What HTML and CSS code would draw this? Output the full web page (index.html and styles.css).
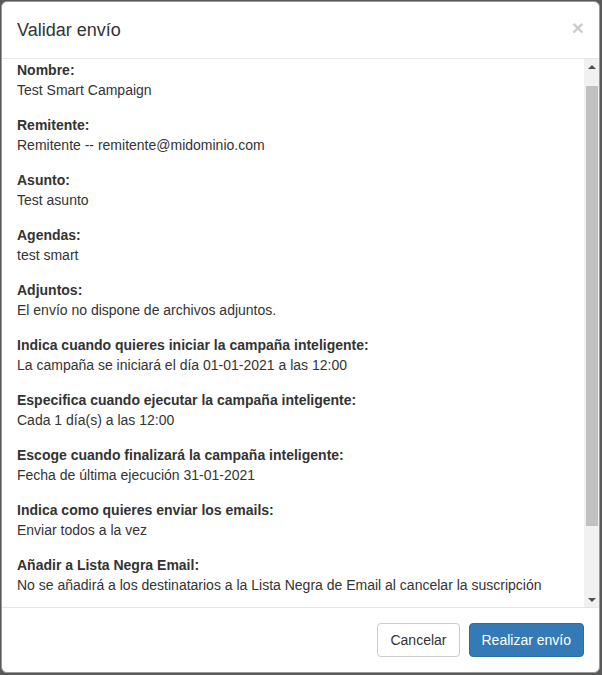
FILE: index.html
```html
<!DOCTYPE html>
<html>
  <head>
    <title>Validar envío</title>
    <link rel="stylesheet" href="styles.css">
  </head>
  <body>
    <div class="modal">
      <div class="modal-header">
        <h4 class="modal-title">Validar envío</h4>
        <button class="close" type="button">&times;</button>
      </div>

      <div class="modal-body">
        <div class="body-content" id="resumen">
          <div class="form-group">
            <label>Nombre:</label>
            <div>Test Smart Campaign</div>
          </div>
          <div class="form-group">
            <label>Remitente:</label>
            <div>Remitente -- remitente@midominio.com</div>
          </div>
          <div class="form-group">
            <label>Asunto:</label>
            <div>Test asunto</div>
          </div>
          <div class="form-group">
            <label>Agendas:</label>
            <div>test smart</div>
          </div>
          <div class="form-group">
            <label>Adjuntos:</label>
            <div>El envío no dispone de archivos adjuntos.</div>
          </div>
          <div class="form-group">
            <label>Indica cuando quieres iniciar la campaña inteligente:</label>
            <div>La campaña se iniciará el día 01-01-2021 a las 12:00</div>
          </div>
          <div class="form-group">
            <label>Especifica cuando ejecutar la campaña inteligente:</label>
            <div>Cada 1 día(s) a las 12:00</div>
          </div>
          <div class="form-group">
            <label>Escoge cuando finalizará la campaña inteligente:</label>
            <div>Fecha de última ejecución 31-01-2021</div>
          </div>
          <div class="form-group">
            <label>Indica como quieres enviar los emails:</label>
            <div>Enviar todos a la vez</div>
          </div>
          <div class="form-group">
            <label>Añadir a Lista Negra Email:</label>
            <div>No se añadirá a los destinatarios a la Lista Negra de Email al cancelar la suscripción</div>
          </div>
        </div>

        <!-- scrollbar of the summary list -->
        <div class="scrollbar">
          <div class="scroll-btn">
            <svg width="8" height="4" viewBox="0 0 8 4"><path d="M0 4 L4 0 L8 4 Z" fill="#505050"/></svg>
          </div>
          <div class="scroll-track">
            <div class="scroll-thumb"></div>
          </div>
          <div class="scroll-btn">
            <svg width="8" height="4" viewBox="0 0 8 4"><path d="M0 0 L8 0 L4 4 Z" fill="#505050"/></svg>
          </div>
        </div>
      </div>

      <div class="modal-footer">
        <button class="btn btn-default" type="button">Cancelar</button>
        <button class="btn btn-primary" type="button">Realizar envío</button>
      </div>
    </div>

    <script>
      document.getElementById("resumen").scrollTop = 14;
    </script>
  </body>
</html>
```

FILE: styles.css
```css
body {
  margin: 0;
  padding: 0;
  background-color: #595959;
  font-family: "Liberation Sans", Arial, sans-serif;
  font-size: 14px;
  line-height: 20px;
  color: #333;
}

.modal {
  box-sizing: border-box;
  display: flex;
  flex-direction: column;
  width: 599px;
  height: 672px;
  margin: 1px 0 0 1px;
  background-color: #fff;
  border: 1px solid #999;
  border-radius: 6px;
  overflow: hidden;
}

.modal-header {
  display: flex;
  align-items: center;
  justify-content: space-between;
  padding: 15px;
  border-bottom: 1px solid #e5e5e5;
}

.modal-title {
  margin: 0;
  font-size: 18px;
  font-weight: normal;
  line-height: 26px;
}

.close {
  padding: 0;
  margin-top: -6px;
  border: none;
  background: none;
  font-family: "Liberation Sans", Arial, sans-serif;
  font-size: 21px;
  font-weight: bold;
  line-height: 1;
  color: #000;
  opacity: 0.2;
  cursor: pointer;
}

.modal-body {
  flex: 1;
  display: flex;
  min-height: 0;
}

.body-content {
  flex: 1;
  overflow: hidden;
  padding: 15px 15px 96px;
}

.scrollbar {
  display: flex;
  flex-direction: column;
  width: 15px;
  background-color: #f1f1f1;
}

.scroll-btn {
  display: flex;
  align-items: center;
  justify-content: center;
  height: 15px;
}

.scroll-track {
  flex: 1;
  padding-top: 12px;
}

.scroll-thumb {
  height: 440px;
  margin: 0 1px 0 2px;
  background-color: #c1c1c1;
}

.form-group {
  margin-bottom: 15px;
}

.form-group label {
  display: block;
  font-weight: bold;
}

.modal-footer {
  display: flex;
  justify-content: flex-end;
  gap: 9px;
  padding: 15px;
  border-top: 1px solid #e5e5e5;
}

.btn {
  padding: 6px 12px;
  font-family: "Liberation Sans", Arial, sans-serif;
  font-size: 14px;
  line-height: 20px;
  border: 1px solid transparent;
  border-radius: 4px;
  cursor: pointer;
}

.btn-default {
  color: #333;
  background-color: #fff;
  border-color: #ccc;
}

.btn-primary {
  color: #fff;
  background-color: #337ab7;
  border-color: #2e6da4;
}
```
